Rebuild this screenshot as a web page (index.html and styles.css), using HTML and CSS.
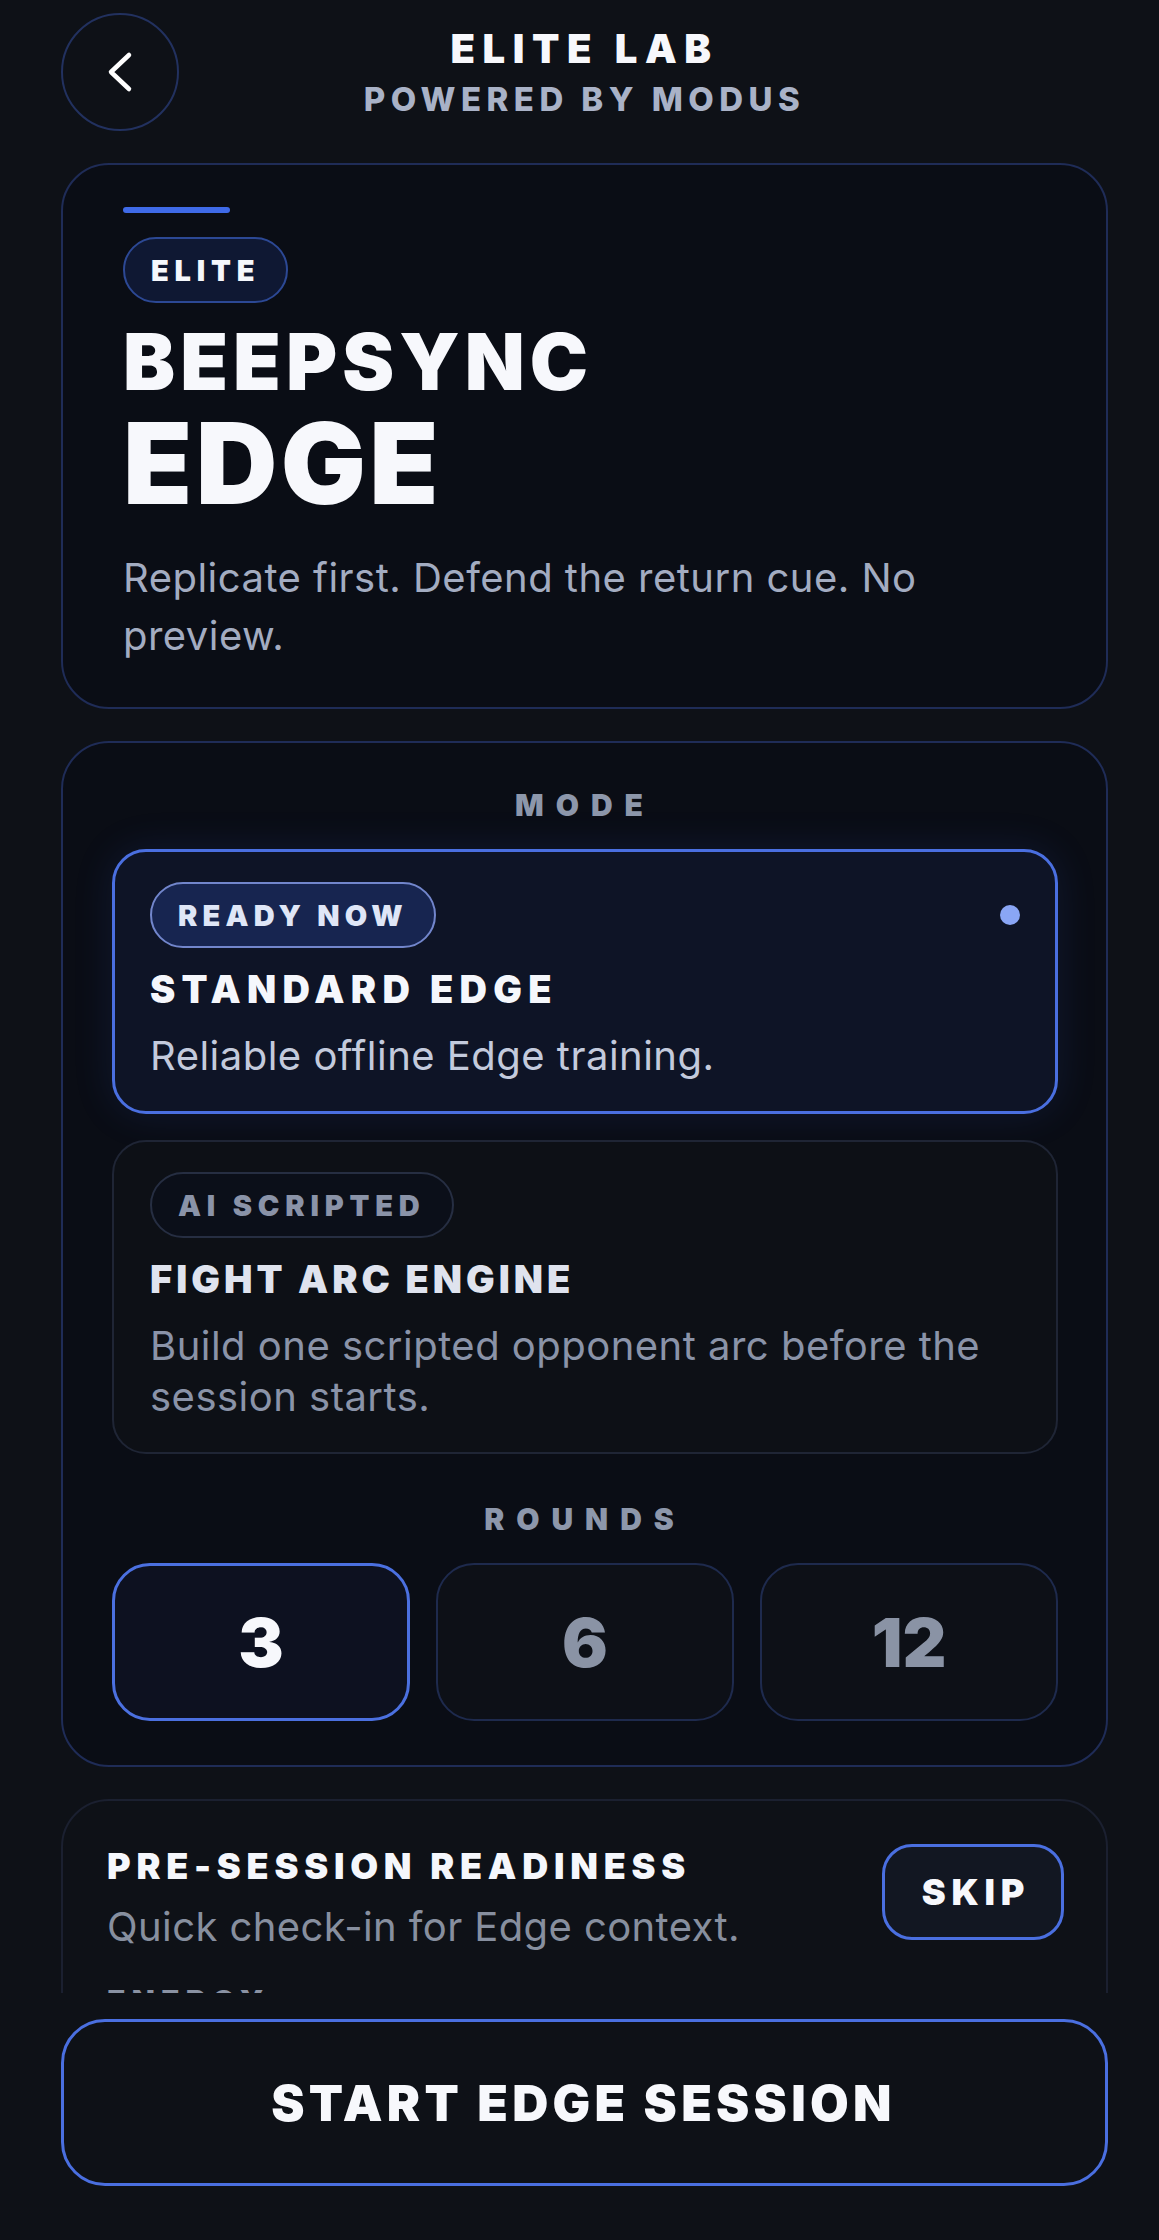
FILE: index.html
```html
<!DOCTYPE html>
<html lang="en">
<head>
  <meta charset="UTF-8">
  <meta name="viewport" content="width=device-width, initial-scale=1.0">
  <title>Elite Lab - BeepSync Edge</title>
  <link rel="stylesheet" href="styles.css">
</head>
<body>
  <div class="screen">
    <main class="scroll">
      <header class="topbar">
        <button class="back" aria-label="Back">
          <svg width="40" height="44" viewBox="0 0 40 44"><path d="M29 5 L11 22 L29 39" fill="none" stroke="#fff" stroke-width="4.5" stroke-linecap="round" stroke-linejoin="round"/></svg>
        </button>
        <div class="brand">
          <div class="brand-title">ELITE LAB</div>
          <div class="brand-sub">POWERED BY MODUS</div>
        </div>
        <div class="spacer"></div>
      </header>

      <section class="hero">
        <div class="hero-bar"></div>
        <span class="tag tag-elite">ELITE</span>
        <h1 class="hero-title"><span class="t1">BEEPSYNC</span><span class="t2">EDGE</span></h1>
        <p class="hero-desc">Replicate first. Defend the return cue. No preview.</p>
      </section>

      <section class="panel">
        <div class="label">MODE</div>

        <div class="mode mode-active">
          <div class="mode-top">
            <span class="tag tag-ready">READY NOW</span>
            <span class="dot"></span>
          </div>
          <div class="mode-title">STANDARD EDGE</div>
          <div class="mode-desc">Reliable offline Edge training.</div>
        </div>

        <div class="mode">
          <div class="mode-top">
            <span class="tag tag-ai">AI SCRIPTED</span>
          </div>
          <div class="mode-title">FIGHT ARC ENGINE</div>
          <div class="mode-desc">Build one scripted opponent arc before the session starts.</div>
        </div>

        <div class="label label-rounds">ROUNDS</div>
        <div class="rounds">
          <button class="round round-on">3</button>
          <button class="round">6</button>
          <button class="round">12</button>
        </div>
      </section>

      <section class="check">
        <div class="check-head">
          <div>
            <div class="check-title">PRE-SESSION READINESS</div>
            <div class="check-sub">Quick check-in for Edge context.</div>
          </div>
          <button class="skip">SKIP</button>
        </div>
        <div class="check-label">ENERGY</div>
      </section>
    </main>

    <footer class="cta-bar">
      <button class="cta">START EDGE SESSION</button>
    </footer>
  </div>
</body>
</html>
```

FILE: styles.css
```css
* { box-sizing: border-box; }
body { margin: 0; background: #0e1117; color: #f5f7fc; font-family: "Inter", "Liberation Sans", sans-serif; }
button { font-family: inherit; cursor: pointer; }

.screen { height: 2240px; display: flex; flex-direction: column; }
.scroll { flex: 1; min-height: 0; overflow: hidden; padding: 13px 51px 0 61px; display: flex; flex-direction: column; gap: 32px; }

/* header */
.topbar { display: grid; grid-template-columns: 118px 1fr 118px; align-items: center; }
.back { width: 118px; height: 118px; border-radius: 50%; border: 2px solid #22315f; background: transparent; display: flex; align-items: center; justify-content: center; padding: 0; }
.brand { text-align: center; }
.brand-title { font-size: 40px; line-height: 48px; font-weight: 900; letter-spacing: 0.19em; color: #f7f8fc; }
.brand-sub { margin-top: 6px; font-size: 33px; line-height: 40px; font-weight: 800; letter-spacing: 0.165em; color: #a9b2c7; }

/* hero card */
.hero { border: 2px solid #1f2c57; border-radius: 48px; background: #0a0d15; padding: 42px 60px 42px 60px; }
.hero-bar { width: 107px; height: 6px; border-radius: 3px; background: #3f6ae8; margin-bottom: 24px; }
.tag { display: inline-flex; align-items: center; height: 66px; padding: 0 26px; border-radius: 33px; border: 2px solid; font-size: 29px; font-weight: 900; letter-spacing: 0.2em; }
.tag-elite { border-color: #2c4894; background: #0f1833; color: #f5f7fc; }
.hero-title { margin: 20px 0 0; font-weight: 900; color: #f7f8fc; }
.hero-title .t1 { display: block; font-size: 78px; line-height: 78px; letter-spacing: 0.065em; }
.hero-title .t2 { display: block; margin-top: 6px; font-size: 113px; line-height: 113px; letter-spacing: 0.03em; }
.hero-desc { margin: 29px 0 0; font-size: 40px; line-height: 58px; letter-spacing: 0.012em; color: #a3acc1; }

/* mode panel */
.panel { border: 2px solid #1f2c57; border-radius: 48px; background: #0a0d15; padding: 44px 48px 44px 49px; display: flex; flex-direction: column; gap: 26px; }
.label { text-align: center; font-size: 30px; line-height: 36px; font-weight: 900; letter-spacing: 0.4em; color: #8d97ab; }
.label-rounds { margin-top: 21px; }

.mode { border: 2px solid #1f2535; border-radius: 34px; background: #0d1016; padding: 30px 35px 30px 36px; }
.mode-active { border: 3px solid #4a6fe0; background: #0e1426; padding: 30px 35px 30px 35px; box-shadow: 0 0 40px rgba(60, 95, 210, 0.14); }
.mode-top { display: flex; align-items: center; justify-content: space-between; }
.dot { width: 20px; height: 20px; border-radius: 50%; background: #8aa6f5; }
.tag-ready { border-color: #7286cc; background: #172550; color: #dfe6f7; letter-spacing: 0.18em; }
.tag-ai { border-color: #262e42; background: #0b0f19; color: #8a93a8; }
.mode-title { margin-top: 18px; font-size: 38px; line-height: 46px; font-weight: 900; letter-spacing: 0.105em; color: #dfe3ee; }
.mode-active .mode-title { color: #f5f7fc; letter-spacing: 0.165em; }
.mode-desc { margin-top: 18px; font-size: 40px; line-height: 51px; letter-spacing: 0.012em; color: #8a93a8; }
.mode-active .mode-desc { color: #c3cadc; }

.rounds { display: grid; grid-template-columns: repeat(3, 1fr); gap: 26px; }
.round { height: 158px; border-radius: 38px; border: 2px solid #1e2a4d; background: #0d1017; color: #8a93a5; font-size: 68px; font-weight: 900; }
.round-on { border: 3px solid #4b70e0; background: #0d1120; color: #f7f8fc; }

/* readiness */
.check { flex-shrink: 0; border: 2px solid #1b2030; border-radius: 48px; background: #0e1117; padding: 43px 42px 120px 44px; }
.check-head { display: flex; justify-content: space-between; align-items: flex-start; }
.check-title { font-size: 36px; line-height: 44px; font-weight: 900; letter-spacing: 0.16em; color: #f5f7fc; }
.check-sub { margin-top: 14px; font-size: 40px; line-height: 50px; letter-spacing: 0.01em; color: #878f9f; }
.skip { width: 182px; height: 96px; border-radius: 30px; border: 3px solid #4a6fe0; background: #121722; color: #f7f8fc; font-size: 36px; font-weight: 900; letter-spacing: 0.16em; padding: 0 0 0 6px; }
.check-label { margin-top: 31px; font-size: 30px; line-height: 36px; font-weight: 900; letter-spacing: 0.21em; color: #8a92a3; }

/* bottom action */
.cta-bar { flex-shrink: 0; padding: 26px 51px 54px 61px; background: #0e1117; }
.cta { width: 100%; height: 167px; border-radius: 44px; border: 3px solid #4a6fe0; background: #0e1117; color: #f7f8fc; font-size: 50px; font-weight: 900; letter-spacing: 0.085em; padding-left: 4px; }
```
